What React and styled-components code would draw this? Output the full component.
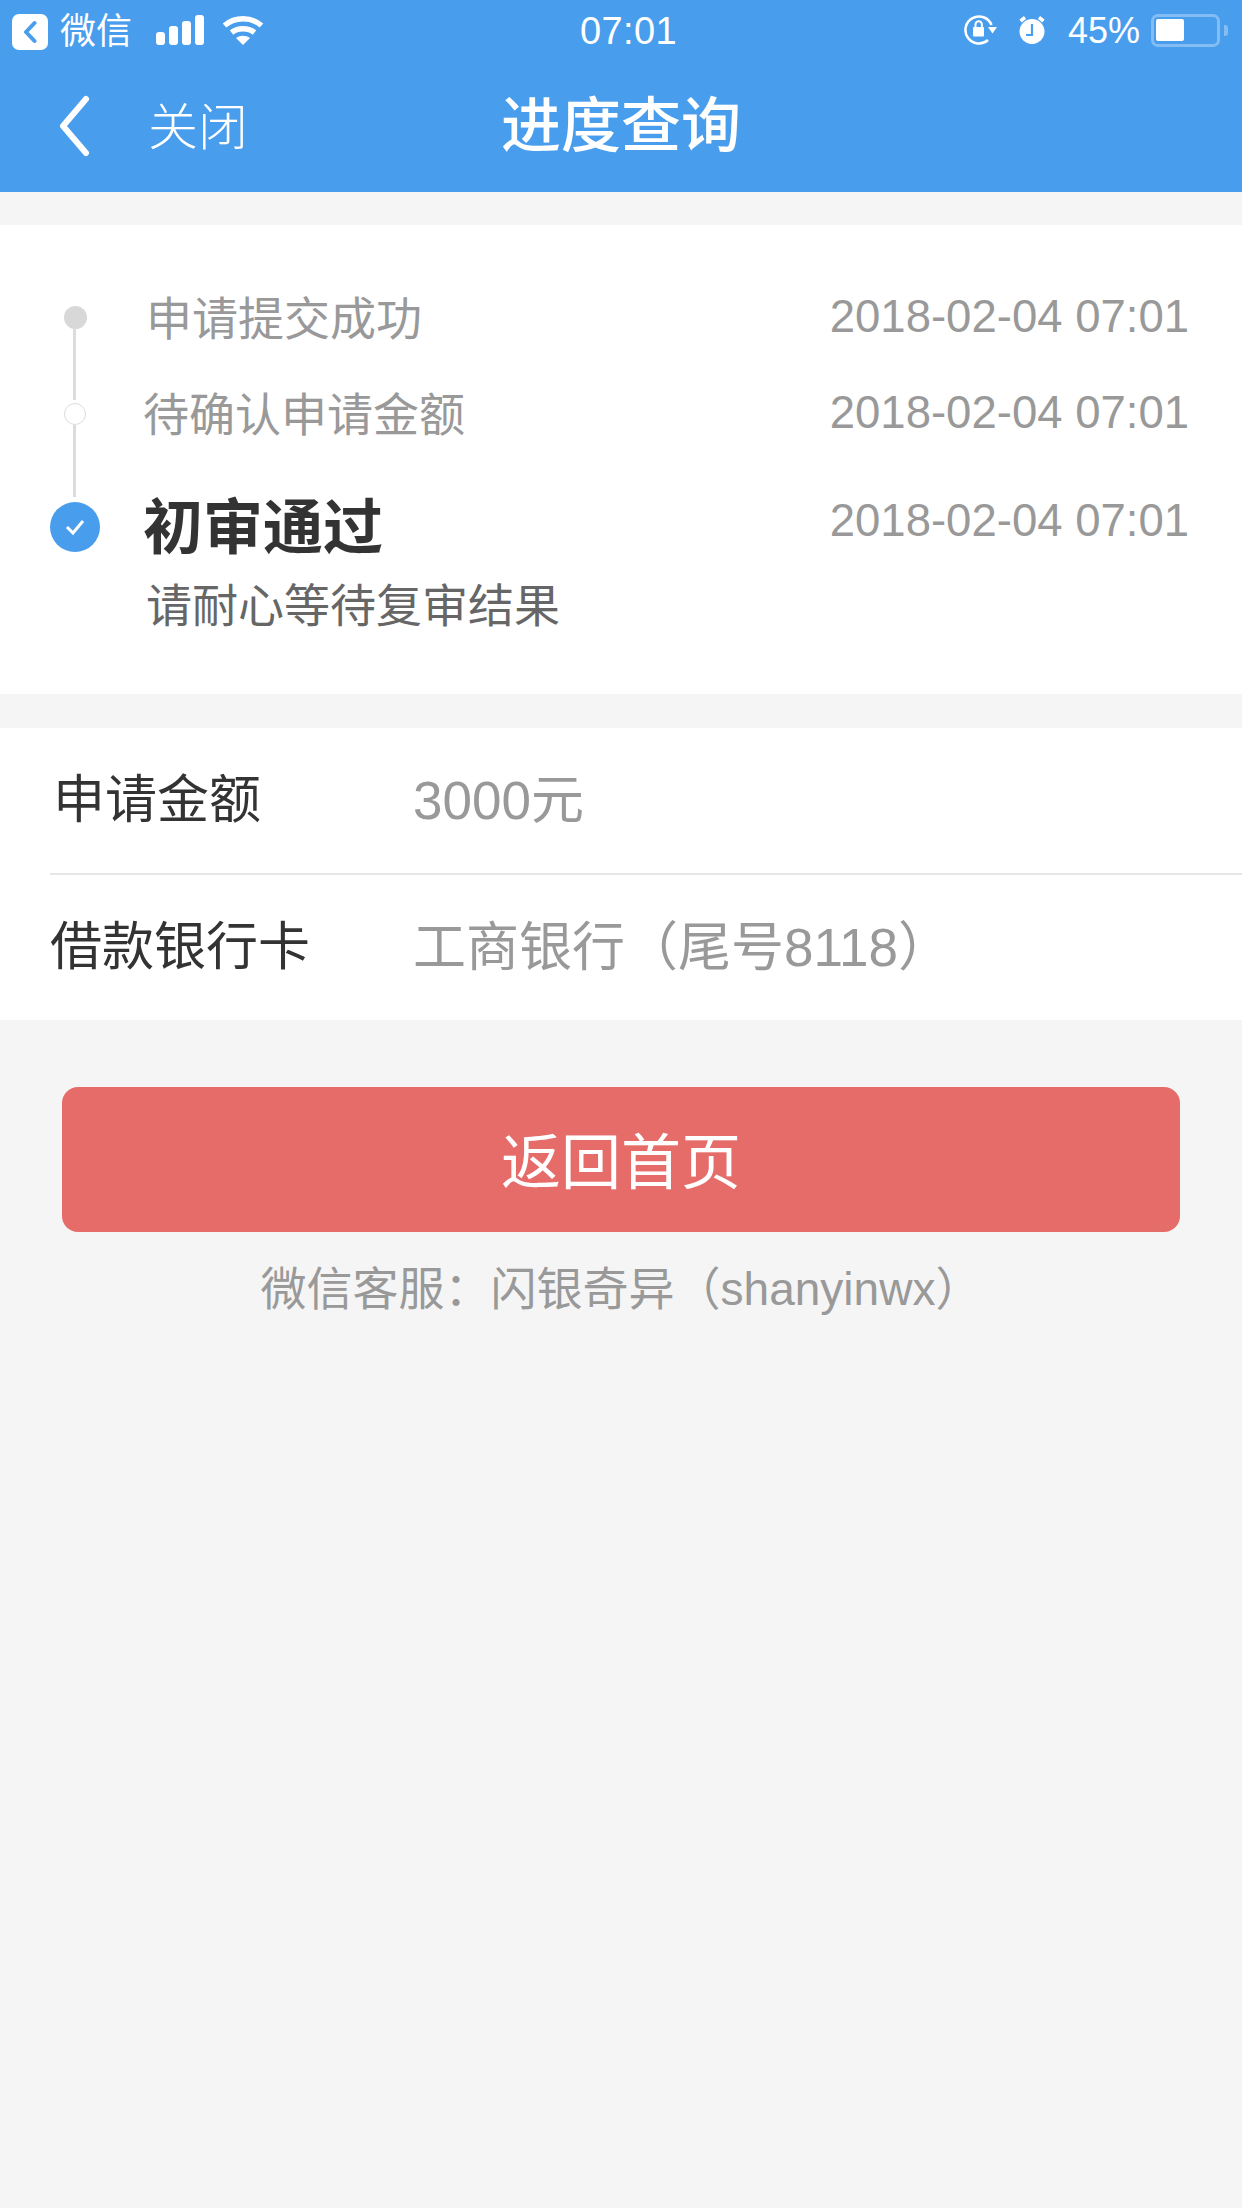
import styled, { createGlobalStyle } from 'styled-components'

const GlobalStyle = createGlobalStyle`
  html, body { margin: 0; padding: 0; background: #f5f5f5; }
  body { font-family: "Liberation Sans", "Noto Sans CJK SC", sans-serif; }
`

const Page = styled.div`
  width: 1242px;
  min-height: 2208px;
  background: #f5f5f5;
  overflow: hidden;
`

const Top = styled.header`
  height: 192px;
  background: #499ded;
  color: #fff;
`

const StatusBar = styled.div`
  height: 60px;
  display: grid;
  grid-template-columns: 568px auto 1fr;
  align-items: center;
  padding: 0 14px 0 12px;
`

const StatusLeft = styled.div`
  display: flex;
  align-items: center;
`

const StatusRight = styled.div`
  display: flex;
  align-items: center;
  justify-content: flex-end;
`

const BackBadge = styled.span`
  width: 36px;
  height: 36px;
  margin-top: 4px;
  border-radius: 7px;
  background: #fff;
  display: flex;
  align-items: center;
  justify-content: center;
`

const StatusApp = styled.span`
  font-size: 36px;
  line-height: 40px;
  margin: 4px 24px 0 12px;
`

const Clock = styled.span`
  font-size: 38px;
  letter-spacing: 0.4px;
  padding-top: 2px;
`

const Percent = styled.span`
  font-size: 36px;
  margin: 2px 11px 0 20px;
`

const Icon = styled.svg`
  display: block;
  margin-right: ${(p) => p.$gap || 0}px;
`

const Battery = styled.span`
  width: 69px;
  height: 33px;
  box-sizing: border-box;
  border: 3px solid #83bdf3;
  border-radius: 7px;
  padding: 2.5px 2px;
  display: block;
`

const BatteryFill = styled.span`
  display: block;
  width: 28px;
  height: 100%;
  background: #fff;
  border-radius: 2px;
`

const BatteryTip = styled.span`
  width: 4px;
  height: 11px;
  background: #83bdf3;
  border-radius: 0 3px 3px 0;
  margin-left: 4px;
`

const NavBar = styled.div`
  height: 132px;
  display: grid;
  grid-template-columns: 1fr auto 1fr;
  align-items: center;
  padding: 0 58px;
  box-sizing: border-box;
`

const NavLeft = styled.div`
  display: flex;
  align-items: center;
`

const CloseText = styled.span`
  font-size: 50px;
  font-weight: 300;
  margin-left: 56px;
  padding-bottom: 6px;
`

const Title = styled.h1`
  margin: 0 0 12px;
  font-size: 60px;
  font-weight: 500;
`

const ProgressCard = styled.section`
  margin-top: 33px;
  height: 469px;
  box-sizing: border-box;
  background: #fff;
  padding-top: 60px;
`

const Step = styled.div`
  display: grid;
  grid-template-columns: 143px 1fr auto;
  height: ${(p) => p.$height}px;
  padding-right: 53px;
`

const Rail = styled.div`
  position: relative;
  display: flex;
  justify-content: center;
  width: 50px;
  margin-left: 50px;
`

const Dot = styled.span`
  margin-top: ${(p) => p.$top}px;
  width: ${(p) => p.$size}px;
  height: ${(p) => p.$size}px;
  box-sizing: border-box;
  border-radius: 50%;
  background: ${(p) => p.$bg};
  border: ${(p) => (p.$ring ? '1px solid #ddd' : 'none')};
  display: flex;
  align-items: center;
  justify-content: center;
`

const Line = styled.span`
  position: absolute;
  left: 23px;
  top: ${(p) => p.$top}px;
  width: 3px;
  height: 72px;
  background: #dcdcdc;
`

const StepLabel = styled.div`
  font-size: 46px;
  line-height: 60px;
  padding: 4px 0 0 ${(p) => p.$shift || 0}px;
  color: #999;
`

const ActiveLabel = styled.div`
  font-size: 60px;
  line-height: 74px;
  margin-top: 1px;
  font-weight: 700;
  color: #333;
`

const Hint = styled.div`
  font-size: 46px;
  line-height: 60px;
  margin: 10px 0 0 3px;
  color: #666;
`

const StepTime = styled.div`
  font-size: 45.5px;
  line-height: 60px;
  margin-top: ${(p) => p.$top}px;
  color: #999;
`

const InfoCard = styled.section`
  margin-top: 34px;
  background: #fff;
`

const InfoRow = styled.div`
  display: flex;
  align-items: center;
  height: ${(p) => p.$height}px;
  box-sizing: border-box;
  margin-left: 50px;
  padding-bottom: 10px;
  border-bottom: ${(p) => (p.$last ? 'none' : '2px solid #e6e6e6')};
`

const InfoLabel = styled.span`
  width: 363px;
  box-sizing: border-box;
  padding-left: ${(p) => p.$shift || 0}px;
  flex: none;
  font-size: 52px;
  color: #333;
`

const InfoValue = styled.span`
  font-size: 53px;
  color: #999;
`

const Footer = styled.div`
  padding: 67px 62px 0;
`

const HomeButton = styled.button`
  display: block;
  width: 100%;
  height: 145px;
  padding: 0 0 4px;
  border: 0;
  border-radius: 16px;
  background: #e66c6a;
  color: #fff;
  font-family: inherit;
  font-size: 60px;
`

const Service = styled.p`
  margin: 27px 0 0;
  text-align: center;
  font-size: 46px;
  line-height: 60px;
  color: #999;
`

const TIME = '2018-02-04 07:01'

const steps = [
  { label: '申请提交成功', height: 96, dotTop: 21, dotSize: 23, dotBg: '#d8d8d8', lineTop: 43, shift: 3 },
  { label: '待确认申请金额', height: 110, dotTop: 22, dotSize: 22, dotBg: '#fff', ring: true, lineTop: 44, shift: 0 },
]

export default function App() {
  return (
    <Page>
      <GlobalStyle />
      <Top>
        <StatusBar>
          <StatusLeft>
            <BackBadge>
              <svg width="14" height="24" viewBox="0 0 14 24" fill="none">
                <path d="M11.5 3 3 12l8.500 9" stroke="#499ded" strokeWidth="4" strokeLinecap="round" strokeLinejoin="round" />
              </svg>
            </BackBadge>
            <StatusApp>微信</StatusApp>
            <Icon width="49" height="30" viewBox="0 0 49 30" $gap={17}>
              <rect x="0" y="17" width="9" height="13" rx="3" fill="#fff" />
              <rect x="13" y="11" width="9" height="19" rx="3" fill="#fff" />
              <rect x="26" y="6" width="9" height="24" rx="3" fill="#fff" />
              <rect x="39" y="0" width="9" height="30" rx="3" fill="#fff" />
            </Icon>
            <Icon width="42" height="30" viewBox="0 0 42 30" fill="none">
              <path d="M2.500 10.500C13 1.500 29 1.500 39.500 10.500" stroke="#fff" strokeWidth="5.500" />
              <path d="M9.500 17.500C16 12.500 26 12.500 32.500 17.500" stroke="#fff" strokeWidth="5.500" />
              <path d="M14 23c4.500-3 9.500-3 14 0l-7 7z" fill="#fff" />
            </Icon>
          </StatusLeft>
          <Clock>07:01</Clock>
          <StatusRight>
            <Icon width="34" height="30" viewBox="0 0 34 30" fill="none" $gap={20}>
              <path d="M24 25A13.500 13.500 0 1 1 27.500 10" stroke="#fff" strokeWidth="2.500" />
              <path d="M24 12h9l-4.500 6.500z" fill="#fff" />
              <path d="M11.500 13V9.500a3.200 3.200 0 0 1 6.400 0V13" stroke="#fff" strokeWidth="2" />
              <rect x="9" y="12" width="11" height="9.500" rx="1" fill="#fff" />
            </Icon>
            <Icon width="30" height="28" viewBox="0 0 30 28" fill="none">
              <circle cx="14" cy="15.500" r="12.500" fill="#fff" />
              <path d="M14 8v11H8" stroke="#499ded" strokeWidth="2.200" />
              <path d="M2.500 5 7 1.500M25.500 5 21 1.500" stroke="#fff" strokeWidth="3.500" />
            </Icon>
            <Percent>45%</Percent>
            <Battery>
              <BatteryFill />
            </Battery>
            <BatteryTip />
          </StatusRight>
        </StatusBar>
        <NavBar>
          <NavLeft>
            <svg width="34" height="62" viewBox="0 0 34 62" fill="none">
              <path d="M28 4 5 31l23 27" stroke="#fff" strokeWidth="6" strokeLinecap="round" strokeLinejoin="round" />
            </svg>
            <CloseText>关闭</CloseText>
          </NavLeft>
          <Title>进度查询</Title>
        </NavBar>
      </Top>

      <ProgressCard>
        {steps.map((step) => (
          <Step key={step.label} $height={step.height}>
            <Rail>
              <Dot $top={step.dotTop} $size={step.dotSize} $bg={step.dotBg} $ring={step.ring} />
              <Line $top={step.lineTop} />
            </Rail>
            <StepLabel $shift={step.shift}>{step.label}</StepLabel>
            <StepTime $top={2}>{TIME}</StepTime>
          </Step>
        ))}
        <Step $height={200}>
          <Rail>
            <Dot $top={11} $size={50} $bg="#499ded">
              <svg width="20" height="18" viewBox="0 0 20 18" fill="none">
                <path d="m2 9 6 6L18 3" stroke="#fff" strokeWidth="3" />
              </svg>
            </Dot>
          </Rail>
          <div>
            <ActiveLabel>初审通过</ActiveLabel>
            <Hint>请耐心等待复审结果</Hint>
          </div>
          <StepTime $top={0}>{TIME}</StepTime>
        </Step>
      </ProgressCard>

      <InfoCard>
        <InfoRow $height={147}>
          <InfoLabel $shift={3}>申请金额</InfoLabel>
          <InfoValue>3000元</InfoValue>
        </InfoRow>
        <InfoRow $height={145} $last>
          <InfoLabel>借款银行卡</InfoLabel>
          <InfoValue>工商银行（尾号8118）</InfoValue>
        </InfoRow>
      </InfoCard>

      <Footer>
        <HomeButton>返回首页</HomeButton>
        <Service>微信客服：闪银奇异（shanyinwx）</Service>
      </Footer>
    </Page>
  )
}
